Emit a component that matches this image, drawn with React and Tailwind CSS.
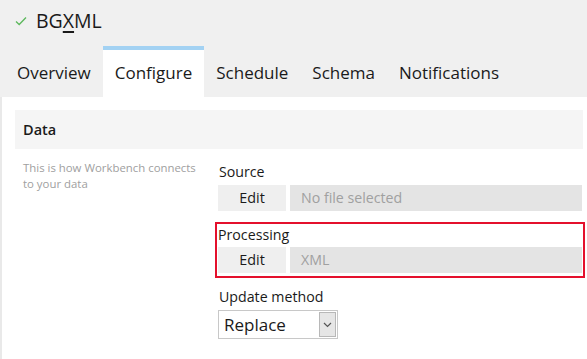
import React from "react";

const font = { fontFamily: '"Open Sans", "Noto Sans", sans-serif' };

function Tab({ label, active }) {
  if (active) {
    return (
      <div className="flex h-full flex-col bg-white">
        <div className="h-[4px] bg-[#a3d2f3]" />
        <div className="flex flex-1 items-center px-[12px] pb-[1px] text-[17px] text-[#1a1a1a]">{label}</div>
      </div>
    );
  }
  return (
    <div className="flex h-full flex-col">
      <div className="h-[4px]" />
      <div className="flex flex-1 items-center px-[12px] pb-[1px] text-[17px] text-[#1a1a1a]">{label}</div>
    </div>
  );
}

function FieldRow({ value }) {
  return (
    <div className="flex h-[26px] gap-[4px]">
      <div className="flex w-[68px] items-center justify-center bg-[#efefef] text-[14.4px] text-[#1a1a1a]">Edit</div>
      <div className="flex flex-1 items-center bg-[#e4e4e4] pl-[11px] text-[14.2px] text-[#a0a0a0]">{value}</div>
    </div>
  );
}

export default function App() {
  return (
    <div className="h-[359px] w-[587px] overflow-hidden bg-white" style={font}>
      <div className="bg-[#f0f0f0]">
        <div className="flex h-[46px] items-center pl-[15px] pb-[5px]">
          <svg width="12" height="10" viewBox="0 0 12 10" className="mr-[9px]">
            <path d="M1 5.5 L4.2 8.5 L11 1.5" fill="none" stroke="#5cb85c" strokeWidth="1.3" />
          </svg>
          <span className="text-[19.5px] text-[#1a1a1a]">
            BG<span className="underline underline-offset-[3px] decoration-[1.5px]">X</span>ML
          </span>
        </div>
        <div className="flex h-[51px] pl-[5px]">
          <Tab label="Overview" />
          <Tab label="Configure" active />
          <Tab label="Schedule" />
          <Tab label="Schema" />
          <Tab label="Notifications" />
        </div>
      </div>
      <div className="h-[262px] border-l-[2px] border-[#e9e9e9] pl-[13px] pr-[4px] pt-[13px]">
        <div className="flex h-[39px] items-center bg-[#f5f5f5] pl-[8px] text-[14.5px] font-semibold text-[#1a1a1a]">Data</div>
        <div className="flex pt-[11px]">
          <div className="w-[203px] pl-[8px] text-[11.4px] leading-[16px] text-[#a0a0a0]">
            This is how Workbench connects
            <br />
            to your data
          </div>
          <div className="flex flex-1 flex-col">
            <div className="flex h-[25px] items-center pl-[1px] pb-[2px] text-[14.2px] text-[#1a1a1a]">Source</div>
            <div className="mr-[1px]">
              <FieldRow value="No file selected" />
            </div>
            <div className="ml-[-3px] mr-[-2px] mt-[11px] border-[2px] border-[#e4102c] pb-[3px] pl-[1px] pr-[1px]">
              <div className="flex h-[23px] items-center pb-[1px] text-[14.2px] text-[#1a1a1a]">Processing</div>
              <FieldRow value="XML" />
            </div>
            <div className="flex h-[32px] items-end pb-[3px] pl-[1px] text-[14.2px] text-[#1a1a1a]">Update method</div>
            <div className="flex h-[29px] w-[120px] items-center border border-[#c8c8c8] bg-white pl-[5px] pr-[1px]">
              <span className="flex-1 text-[17px] text-[#1a1a1a]">Replace</span>
              <div className="flex h-[25px] w-[17px] items-center justify-center border border-[#b8b8b8] bg-[#e6e6e6]">
                <svg width="9" height="6" viewBox="0 0 9 6">
                  <path d="M1 1 L4.5 4.5 L8 1" fill="none" stroke="#555" strokeWidth="1.2" />
                </svg>
              </div>
            </div>
          </div>
        </div>
      </div>
    </div>
  );
}
